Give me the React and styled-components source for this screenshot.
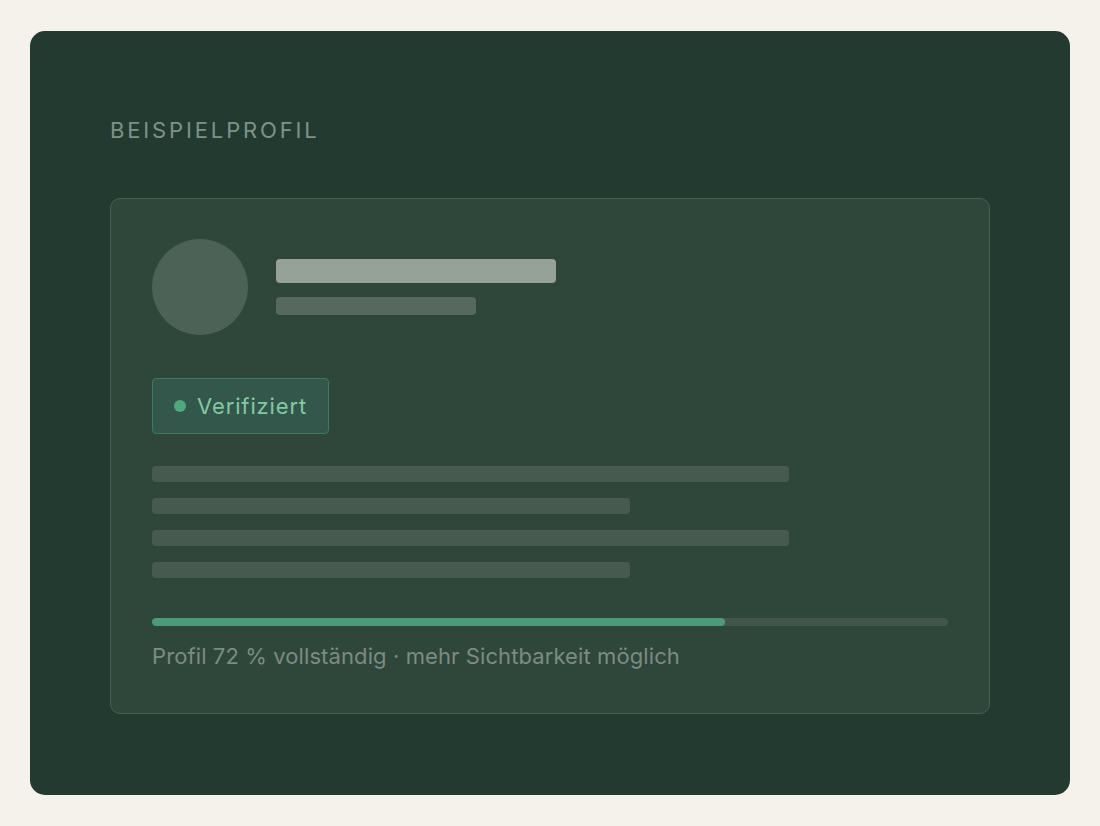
import React from 'react'
import styled, { createGlobalStyle } from 'styled-components'

const GlobalStyle = createGlobalStyle`
  html, body {
    margin: 0;
    padding: 0;
    background: #f5f2ec;
    font-family: Inter, "Noto Sans", "Liberation Sans", sans-serif;
  }
  * { box-sizing: border-box; }
`

const Page = styled.main`
  min-height: 100vh;
  display: flex;
  align-items: center;
  justify-content: center;
`

const Panel = styled.section`
  width: 1040px;
  height: 764px;
  background: #233a30;
  border-radius: 15px;
  padding: 80px;
  display: flex;
  flex-direction: column;
`

const Label = styled.div`
  font-size: 22px;
  line-height: 1.5;
  padding-top: 3px;
  letter-spacing: 0.13em;
  color: #7f9288;
  text-transform: uppercase;
  margin-bottom: 51px;
`

const Card = styled.div`
  border: 1px solid #4b5e53;
  background: #2f463b;
  border-radius: 10px;
  padding: 40px 41px;
  display: flex;
  flex-direction: column;
`

const Header = styled.div`
  display: flex;
  align-items: center;
  gap: 28px;
`

const Avatar = styled.div`
  width: 96px;
  height: 96px;
  border-radius: 50%;
  background: #4c6256;
`

const NameCol = styled.div`
  display: flex;
  flex-direction: column;
  gap: 14px;
`

const Bar = styled.div`
  width: ${p => p.w}px;
  height: ${p => p.h}px;
  border-radius: 4px;
  background: ${p => p.color};
`

const Badge = styled.div`
  align-self: flex-start;
  margin-top: 43px;
  height: 56px;
  display: inline-flex;
  align-items: center;
  gap: 11px;
  padding: 0 21px;
  border: 1px solid #3e7a5c;
  background: #33574a;
  border-radius: 4px;
  font-size: 22px;
  letter-spacing: 0.04em;
  color: #80cba3;
`

const Dot = styled.span`
  width: 12px;
  height: 12px;
  border-radius: 50%;
  background: #4eaa7c;
`

const Lines = styled.div`
  margin-top: 32px;
  display: flex;
  flex-direction: column;
  gap: 16px;
`

const Line = styled.div`
  width: ${p => p.w}%;
  height: 16px;
  border-radius: 4px;
  background: #465a4f;
`

const Track = styled.div`
  margin-top: 40px;
  height: 8px;
  border-radius: 4px;
  background: #43564b;
  overflow: hidden;
`

const Fill = styled.div`
  height: 100%;
  border-radius: 4px;
  background: #4a9d77;
`

const Caption = styled.p`
  margin: 14px 0 0;
  font-size: 22px;
  line-height: 1.5;
  letter-spacing: 0.1px;
  color: #7c8c82;
`

export default function App() {
  const progress = 72
  return (
    <Page>
      <GlobalStyle />
      <Panel>
        <Label>Beispielprofil</Label>
        <Card>
          <Header>
            <Avatar />
            <NameCol>
              <Bar w={280} h={24} color="#96a198" />
              <Bar w={200} h={18} color="#57695e" />
            </NameCol>
          </Header>
          <Badge>
            <Dot />
            Verifiziert
          </Badge>
          <Lines>
            <Line w={80} />
            <Line w={60} />
            <Line w={80} />
            <Line w={60} />
          </Lines>
          <Track>
            <Fill style={{ width: `${progress}%` }} />
          </Track>
          <Caption>Profil {progress} % vollständig · mehr Sichtbarkeit möglich</Caption>
        </Card>
      </Panel>
    </Page>
  )
}
